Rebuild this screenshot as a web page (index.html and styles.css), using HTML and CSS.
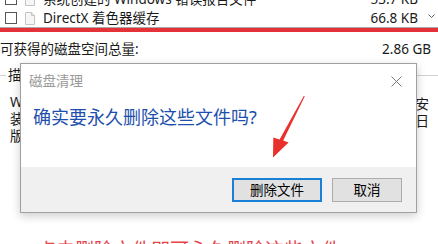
FILE: index.html
```html
<!DOCTYPE html>
<html lang="zh-CN">
<head>
<meta charset="utf-8">
<title>磁盘清理</title>
<link rel="stylesheet" href="styles.css">
</head>
<body>
<div class="shot">
  <div class="filelist">
    <div class="row">
      <span class="cb"></span>
      <svg class="ficon" width="10" height="13" viewBox="0 0 10 13"><path d="M0.5 0.5H6.5L9.5 3.5V12.5H0.5Z" fill="#f6f6f6" stroke="#c4c4c4"/><path d="M6.5 0.5V3.5H9.5" fill="none" stroke="#c4c4c4"/></svg>
      <span class="name">系统创建的 Windows 错误报告文件</span>
      <span class="size">53.7 KB</span>
      <span class="sb"></span>
    </div>
    <div class="row">
      <span class="cb"></span>
      <svg class="ficon" width="10" height="13" viewBox="0 0 10 13"><path d="M0.5 0.5H6.5L9.5 3.5V12.5H0.5Z" fill="#f6f6f6" stroke="#c4c4c4"/><path d="M6.5 0.5V3.5H9.5" fill="none" stroke="#c4c4c4"/></svg>
      <span class="name">DirectX 着色器缓存</span>
      <span class="size">66.8 KB</span>
      <span class="sb"><svg width="7" height="4" viewBox="0 0 7 4"><path d="M0.5 0.5L3.5 3.5L6.5 0.5" fill="none" stroke="#606060"/></svg></span>
    </div>
  </div>
  <div class="redrule"></div>
  <div class="summary"><span>可获得的磁盘空间总量:</span><span>2.86 GB</span></div>
  <fieldset class="group">
    <legend>描述</legend>
    <div class="line"><span class="lead">Windows 升级日志文件包含的信息可以帮助识别和排除在 Windows</span><span class="tail">安</span></div>
    <div class="line"><span class="lead">装、升级或维修期间发生的问题。删除这些文件不会影响系统的运行</span><span class="tail">日</span></div>
    <div class="line"><span class="lead">版本的文件。</span></div>
  </fieldset>

  <div class="dialog">
    <div class="dlg-head">
      <span class="dlg-title">磁盘清理</span>
      <svg class="close" width="11" height="11" viewBox="0 0 11 11"><path d="M0.5 0.5L10.5 10.5M10.5 0.5L0.5 10.5" stroke="#7a7a7a" stroke-width="1"/></svg>
    </div>
    <div class="dlg-body">确实要永久删除这些文件吗?</div>
    <div class="dlg-foot">
      <button class="btn btn-primary">删除文件</button>
      <button class="btn btn-cancel">取消</button>
    </div>
  </div>

  <svg class="arrow" width="438" height="244" viewBox="0 0 438 244"><polygon points="304.8,96.3 283.2,140.4 288.6,142.6 273,157.6 273.3,137.6 279.6,139.4 303.8,96" fill="#e8302c"/></svg>
</div>
<p class="note">点击删除文件即可永久删除这些文件</p>
</body>
</html>
```

FILE: styles.css
```css
html, body {
  margin: 0;
  padding: 0;
  background: #ffffff;
}
body {
  width: 438px;
  height: 244px;
  overflow: hidden;
  font-family: "Noto Sans", "Noto Sans CJK SC", sans-serif;
  font-size: 13.5px;
  color: #1a1a1a;
}
.shot {
  position: relative;
  height: 228px;
  overflow: hidden;
}
.filelist {
  margin-top: -11px;
  border-bottom: 1px solid #a8a8a8;
}
.row {
  display: grid;
  grid-template-columns: 12px 10px 1fr auto 20px;
  column-gap: 0;
  align-items: center;
  height: 19px;
  padding-left: 5px;
  padding-top: 1px;
  box-sizing: border-box;
}
.cb {
  width: 12px;
  height: 12px;
  box-sizing: border-box;
  border: 1px solid #555555;
  background: #fff;
}
.ficon {
  margin-left: 8px;
  display: block;
}
.name {
  margin-left: 16px;
  white-space: nowrap;
  line-height: 18px;
}
.size {
  white-space: nowrap;
  line-height: 18px;
}
.sb {
  display: flex;
  justify-content: flex-end;
  padding-right: 3px;
  align-self: start;
  padding-top: 5px;
}
.sb svg { display: block; }
.redrule {
  height: 4px;
  background: #e53238;
}
.summary {
  display: flex;
  justify-content: space-between;
  margin-top: 8px;
  padding-right: 7px;
  line-height: 18px;
}
.group {
  margin: 8px -12px 0 -3px;
  padding: 10px 20px 0 8px;
  border: 1px solid #d2d2d2;
  border-bottom: none;
  min-width: 0;
  line-height: 17px;
}
.group legend {
  padding: 0 2px;
  line-height: 18px;
}
.line {
  display: flex;
  padding-left: 4px;
  height: 17px;
}
.lead {
  flex: 1;
  min-width: 0;
  overflow: hidden;
  white-space: nowrap;
}
.tail {
  padding-top: 2px;
}
.dialog {
  position: absolute;
  left: 20px;
  top: 63px;
  width: 397px;
  height: 150px;
  box-sizing: border-box;
  border: 1px solid #a0a0a0;
  background: #ffffff;
  box-shadow: 0 3px 9px rgba(0, 0, 0, 0.2);
  display: flex;
  flex-direction: column;
}
.dlg-head {
  display: flex;
  justify-content: space-between;
  align-items: center;
  padding: 8px 14px 0 8px;
  height: 18px;
}
.dlg-title {
  color: #9a9a9a;
  line-height: 18px;
}
.close { display: block; }
.dlg-body {
  flex: 1;
  padding: 15px 12px 0 12px;
  font-size: 18px;
  line-height: 24px;
  color: #1e4fae;
}
.dlg-foot {
  height: 45px;
  box-sizing: border-box;
  background: #f0f0f0;
  display: flex;
  justify-content: flex-end;
  align-items: flex-start;
  gap: 10px;
  padding: 11px 14px 0 0;
}
.btn {
  height: 24px;
  box-sizing: border-box;
  background: #e1e1e1;
  font-family: "Noto Sans", "Noto Sans CJK SC", sans-serif;
  font-size: 13.5px;
  color: #000;
  padding: 0;
  margin: 0;
  line-height: 18px;
}
.btn-primary {
  width: 90px;
  border: 2px solid #1a7fd6;
}
.btn-cancel {
  width: 70px;
  border: 1px solid #adadad;
}
.arrow {
  position: absolute;
  left: 0;
  top: 0;
  pointer-events: none;
}
.note {
  margin: 10px 0 0 37px;
  font-size: 19px;
  line-height: 24px;
  color: #e8424a;
  white-space: nowrap;
}
```
